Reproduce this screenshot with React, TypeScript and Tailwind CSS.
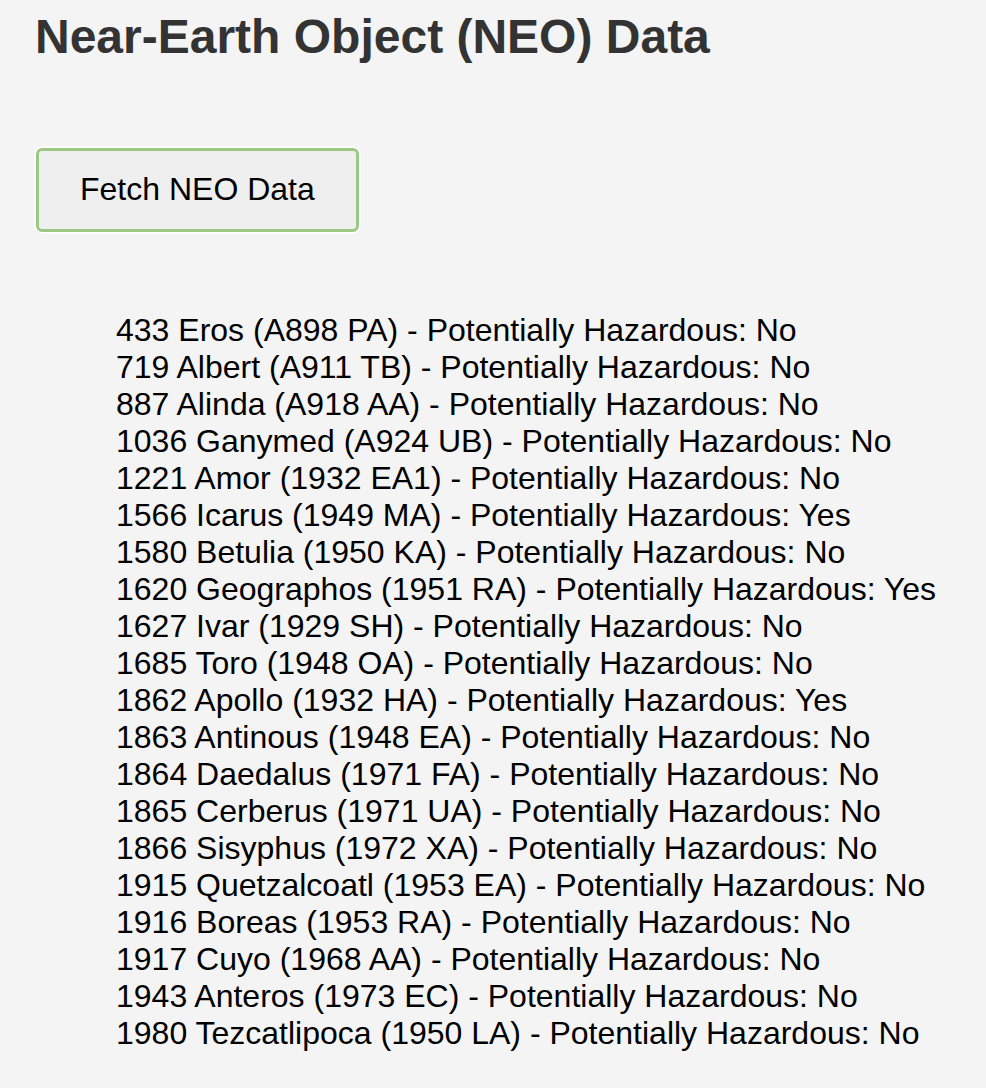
const neos = [
  { name: '433 Eros (A898 PA)', hazardous: false },
  { name: '719 Albert (A911 TB)', hazardous: false },
  { name: '887 Alinda (A918 AA)', hazardous: false },
  { name: '1036 Ganymed (A924 UB)', hazardous: false },
  { name: '1221 Amor (1932 EA1)', hazardous: false },
  { name: '1566 Icarus (1949 MA)', hazardous: true },
  { name: '1580 Betulia (1950 KA)', hazardous: false },
  { name: '1620 Geographos (1951 RA)', hazardous: true },
  { name: '1627 Ivar (1929 SH)', hazardous: false },
  { name: '1685 Toro (1948 OA)', hazardous: false },
  { name: '1862 Apollo (1932 HA)', hazardous: true },
  { name: '1863 Antinous (1948 EA)', hazardous: false },
  { name: '1864 Daedalus (1971 FA)', hazardous: false },
  { name: '1865 Cerberus (1971 UA)', hazardous: false },
  { name: '1866 Sisyphus (1972 XA)', hazardous: false },
  { name: '1915 Quetzalcoatl (1953 EA)', hazardous: false },
  { name: '1916 Boreas (1953 RA)', hazardous: false },
  { name: '1917 Cuyo (1968 AA)', hazardous: false },
  { name: '1943 Anteros (1973 EC)', hazardous: false },
  { name: '1980 Tezcatlipoca (1950 LA)', hazardous: false },
]

export default function App() {
  return (
    <div className="min-h-[1088px] bg-[#f4f4f4] pl-[35px] pt-[9px] font-['Liberation_Sans',Arial,sans-serif] text-black">
      <h1 className="text-[48px] leading-[55px] font-bold text-[#333]">
        Near-Earth Object (NEO) Data
      </h1>

      {/* Fetch button */}
      <button
        type="button"
        className="mt-[84px] ml-[1px] rounded-[6px] border-[3px] border-[#9bc984] bg-[#efefef] px-[41px] pt-[19px] pb-[21px] text-[32px] leading-[38px] text-black shadow-[0_0_0_1.5px_#ffffff]"
      >
        Fetch NEO Data
      </button>

      {/* List */}
      <ul className="mt-[80px] pl-[81px] pb-[40px] text-[32px] leading-[37px]">
        {neos.map((neo) => (
          <li key={neo.name} className="whitespace-nowrap">
            {neo.name} - Potentially Hazardous: {neo.hazardous ? 'Yes' : 'No'}
          </li>
        ))}
      </ul>
    </div>
  )
}
